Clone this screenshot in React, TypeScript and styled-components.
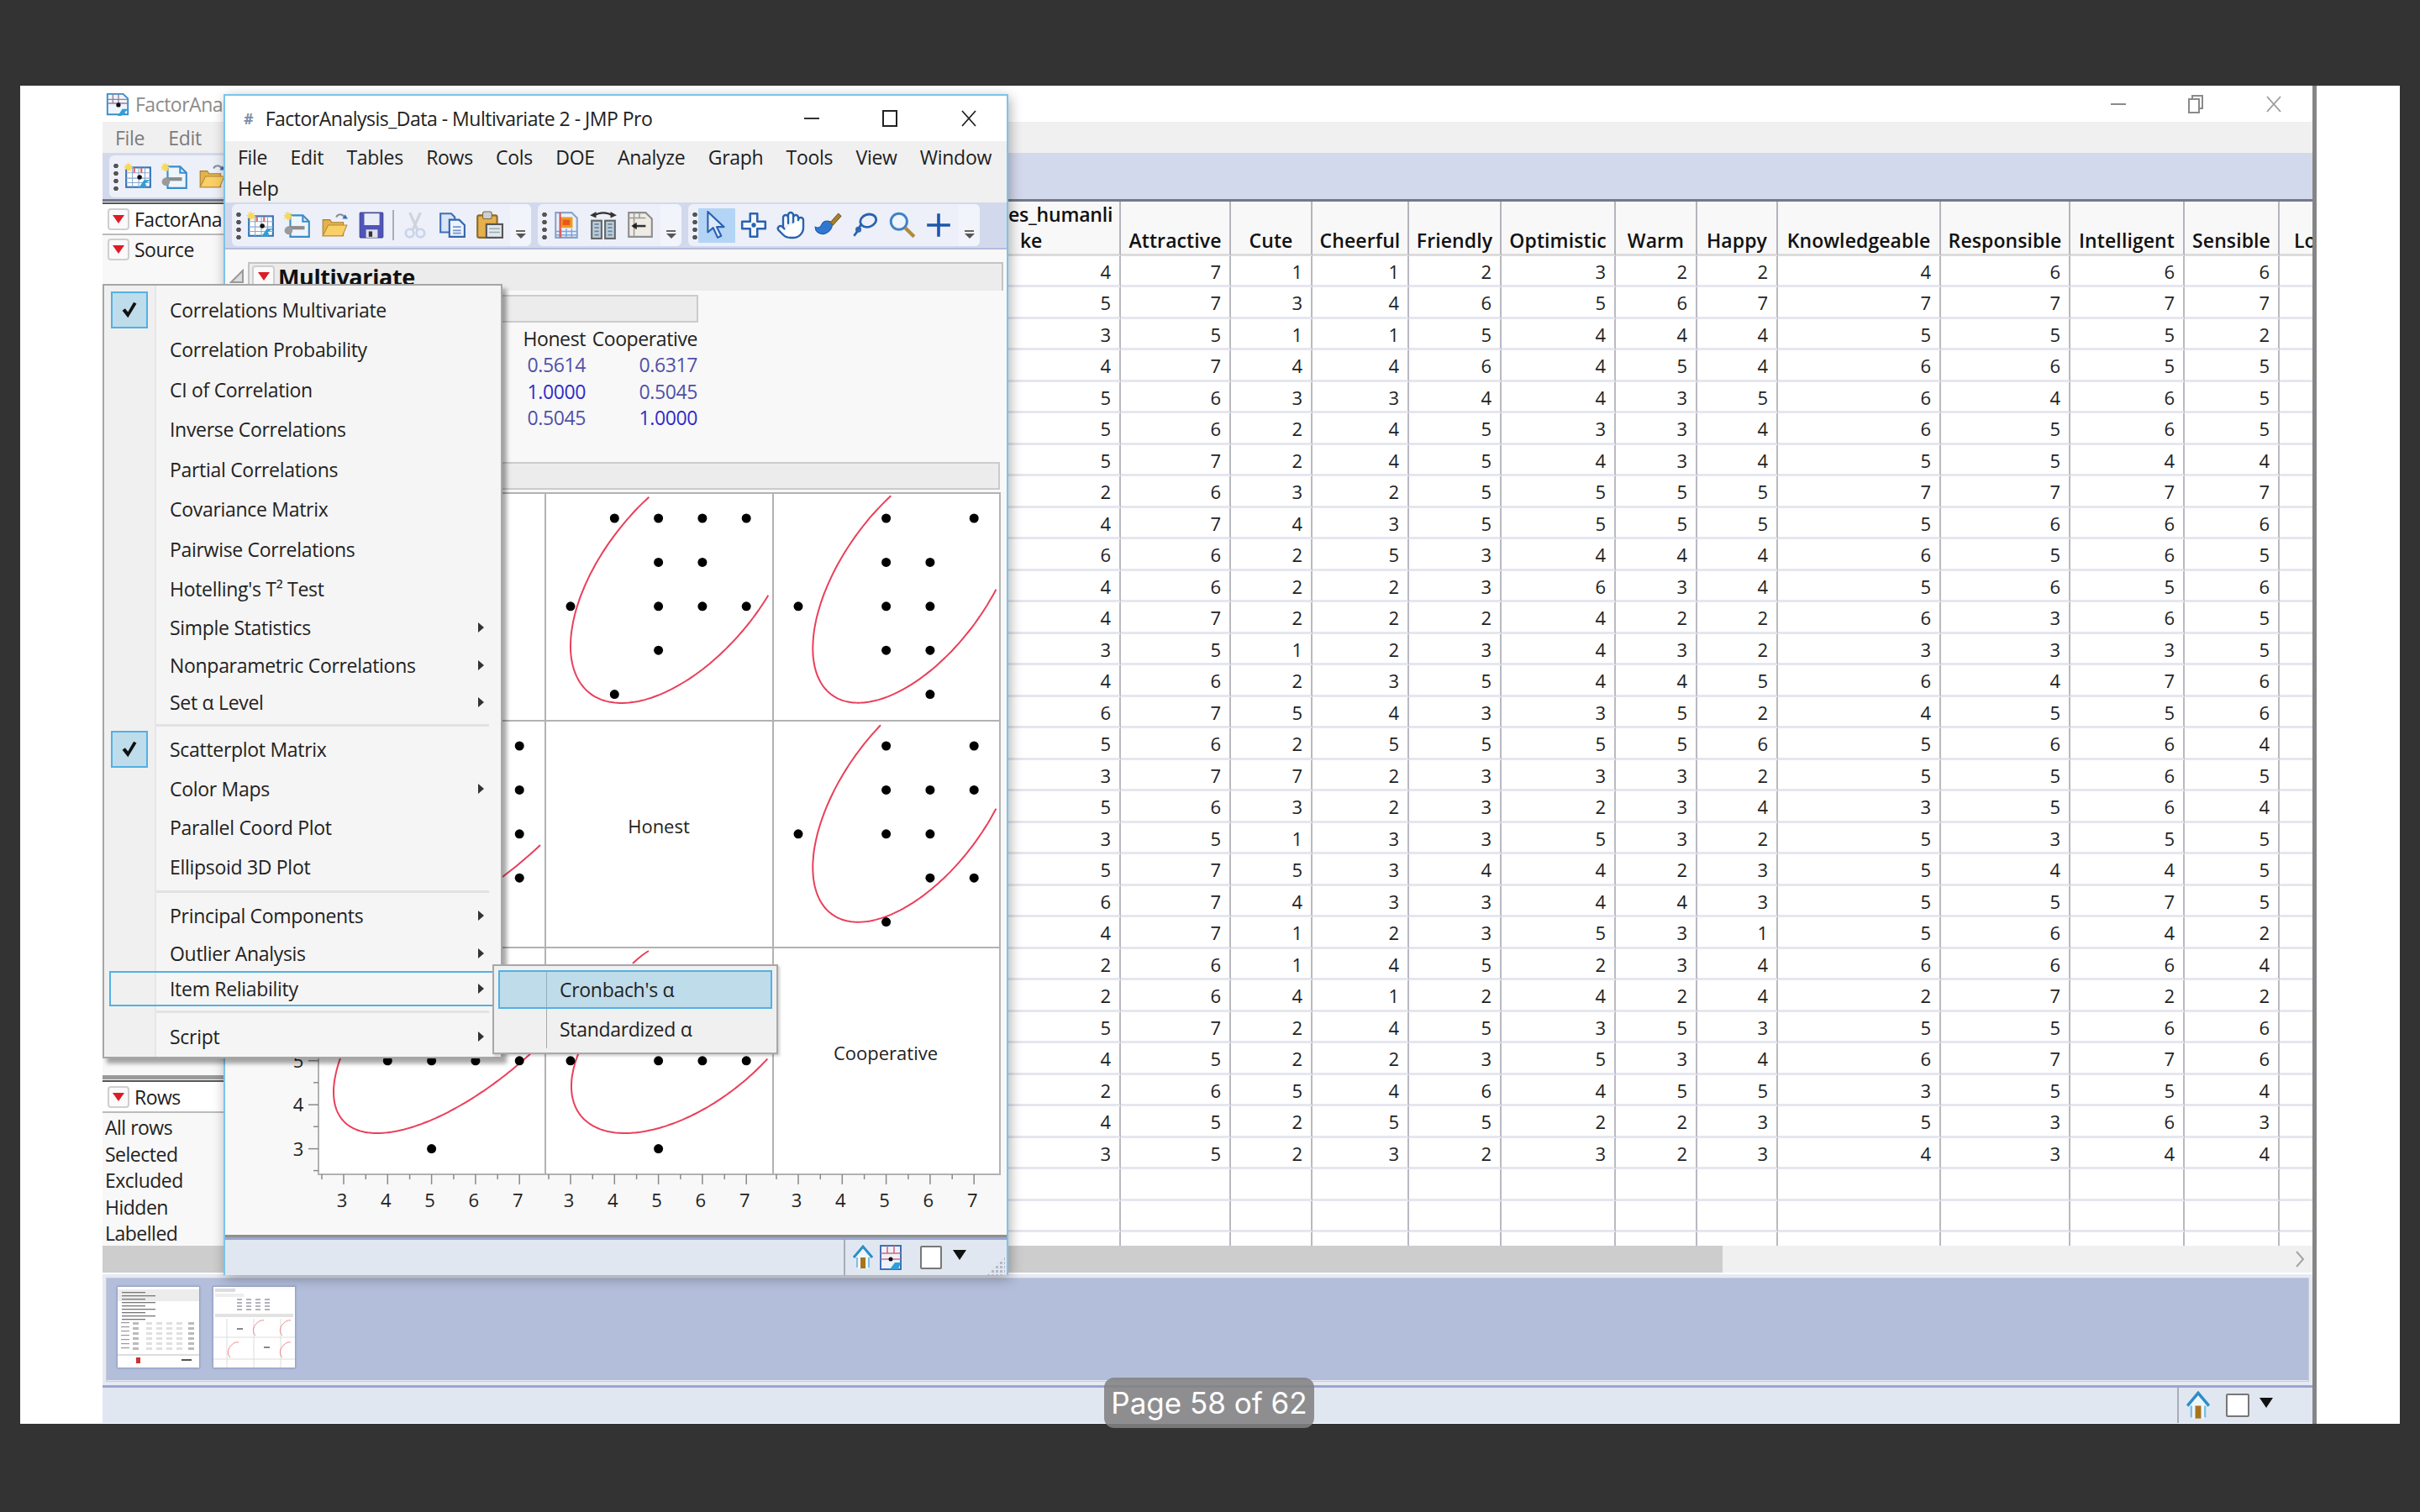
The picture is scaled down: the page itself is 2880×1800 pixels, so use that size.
import React from "react";
import styled, { createGlobalStyle } from "styled-components";
import { Hand } from "lucide-react";

const UI = `"Open Sans", "Noto Sans", "Liberation Sans", sans-serif`;

const Global = createGlobalStyle`
  html, body { margin: 0; padding: 0; background: #333333; }
  body { width: 2880px; height: 1800px; overflow: hidden; font-family: ${UI}; }
  * { box-sizing: border-box; }
`;

const Page = styled.div`
  width: 2880px;
  height: 1800px;
  padding: 102px 0 0 24px;
  background: #333333;
`;
const Slide = styled.div`
  position: relative;
  width: 2832px;
  height: 1593px;
  padding-left: 98px;
  background: #ffffff;
`;
const MainWindow = styled.div`
  display: flex;
  flex-direction: column;
  width: 2635px;
  height: 1593px;
  border-right: 5px solid #858585;
  overflow: hidden;
`;
const TitleBar = styled.div<{ $h: number }>`
  display: flex;
  align-items: center;
  flex: none;
  height: ${(p) => p.$h}px;
  background: #ffffff;
`;
const MainTitle = styled.span`
  margin-left: 6px;
  font-size: 23px;
  letter-spacing: -0.5px;
  color: #8c8c8c;
`;
const WinControls = styled.div<{ $gap: number; $right: number }>`
  display: flex;
  align-items: center;
  gap: ${(p) => p.$gap}px;
  margin-left: auto;
  margin-right: ${(p) => p.$right}px;
`;
const MenuBar = styled.div<{ $dim?: boolean; $h: number; $pad: number; $gap: number }>`
  display: flex;
  flex-wrap: wrap;
  align-content: flex-start;
  column-gap: ${(p) => p.$gap}px;
  flex: none;
  height: ${(p) => p.$h}px;
  padding: 1px 0 0 ${(p) => p.$pad}px;
  background: #f0f0f0;
  color: ${(p) => (p.$dim ? "#7b7b7b" : "#1d1d1d")};
  font-size: 23px;
  letter-spacing: -0.3px;
`;
const MenuLabel = styled.span`
  height: 37px;
  line-height: 37px;
`;
const ToolBar = styled.div<{ $h: number; $edge: string; $edgeW: number }>`
  display: flex;
  align-items: center;
  gap: 8px;
  flex: none;
  height: ${(p) => p.$h}px;
  padding-left: 8px;
  background: #d3d9ec;
  border-bottom: ${(p) => p.$edgeW}px solid ${(p) => p.$edge};
  overflow: hidden;
`;
const ToolGroup = styled.div<{ $w: number }>`
  display: flex;
  align-items: center;
  flex: none;
  width: ${(p) => p.$w}px;
  height: 50px;
  padding-left: 4px;
  background: #edf0f8;
  border-radius: 6px;
`;
const Grip = styled.div`
  flex: none;
  width: 8px;
  height: 34px;
  background: radial-gradient(circle, #555 0 2.5px, transparent 3px) 0 0 / 8px 9px repeat-y;
`;
const ToolSlot = styled.div<{ $on?: boolean }>`
  display: flex;
  align-items: center;
  justify-content: center;
  flex: none;
  width: 44px;
  height: 41px;
  background: ${(p) => (p.$on ? "#b4d4f6" : "transparent")};
`;
const ToolSep = styled.div`
  flex: none;
  width: 2px;
  height: 36px;
  margin: 0 3px;
  background: #a9adb8;
`;
const Overflow = styled.div`
  display: flex;
  flex-direction: column;
  align-items: center;
  justify-content: flex-end;
  align-self: stretch;
  flex: none;
  width: 25px;
  margin-left: auto;
  padding-bottom: 9px;
  background: #f1f4fb;
  border-radius: 0 6px 6px 0;
  &::before { content: ""; width: 11px; height: 2px; margin-bottom: 2px; background: #666; }
  &::after { content: ""; border-left: 6px solid transparent; border-right: 6px solid transparent; border-top: 6px solid #555; }
`;
const Body = styled.div`
  display: flex;
  flex: none;
  height: 1243px;
`;
const LeftPanel = styled.div`
  display: flex;
  flex-direction: column;
  flex: none;
  width: 146px;
  background: #f8f8f8;
`;
const PanelHead = styled.div<{ $boxed?: boolean }>`
  display: flex;
  align-items: center;
  flex: none;
  height: ${(p) => (p.$boxed ? 39 : 34)}px;
  margin-top: ${(p) => (p.$boxed ? 1 : 0)}px;
  padding-left: 6px;
  gap: 6px;
  font-size: 23px;
  letter-spacing: -0.5px;
  color: #1d1d1d;
  white-space: nowrap;
  overflow: hidden;
  background: ${(p) => (p.$boxed ? "#ffffff" : "transparent")};
  border-top: ${(p) => (p.$boxed ? "2px solid #555" : "0")};
  border-bottom: ${(p) => (p.$boxed ? "2px solid #bbb" : "0")};
`;
const PanelGap = styled.div`
  flex: none;
  height: 971px;
  border-bottom: 5px solid #9a9a9a;
`;
const RowsList = styled.div`
  display: flex;
  flex-direction: column;
  padding: 2px 0 0 3px;
  font-size: 23px;
  letter-spacing: -0.5px;
  color: #222;
`;
const RowsLabel = styled.div`
  height: 31.5px;
  line-height: 31.5px;
`;
const TableArea = styled.div`
  display: flex;
  flex-direction: column;
  width: 2484px;
`;
const Grid = styled.div`
  display: grid;
  grid-template-columns: 1066px 131px 97px 115px 110px 136px 97px 96px 194px 154px 136px 113px 39px;
  grid-template-rows: 64.5px;
  grid-auto-rows: 37.5px;
  flex: none;
  height: 1243px;
  overflow: hidden;
  color: #222;
  font-size: 22px;
`;
const HeadCell = styled.div`
  display: flex;
  flex-direction: column;
  align-items: center;
  justify-content: flex-end;
  padding-bottom: 0;
  background: #f8f8f8;
  border-right: 2px solid #b4b4bc;
  border-bottom: 3px solid #dcdcdc;
  font-weight: 600;
  font-size: 23px;
  letter-spacing: 0.1px;
  line-height: 31px;
  white-space: nowrap;
  color: #111;
  overflow: hidden;
`;
const FirstHead = styled(HeadCell)`
  align-items: flex-start;
  padding-left: 932px;
  letter-spacing: -0.2px;
`;
const LastHead = styled(HeadCell)`
  align-items: flex-start;
  padding-left: 17px;
  border-right: 0;
`;
const SecondLine = styled.span`
  padding-left: 14px;
`;
const Cell = styled.div`
  padding: 0 10px 0 0;
  text-align: right;
  line-height: 36px;
  border-right: 2px solid #b9b9c0;
  border-bottom: 3px solid #e6e6f0;
  &:nth-child(13n) { border-right: 0; }
`;
const ScrollBar = styled.div`
  display: flex;
  align-items: center;
  justify-content: flex-end;
  flex: none;
  height: 32px;
  padding-right: 9px;
  background: linear-gradient(#cdcdcd, #cdcdcd) 0 0 / 1928px 100% no-repeat #f0f0f0;
  color: #9a9a9a;
`;
const ThumbPanel = styled.div`
  display: flex;
  flex: none;
  gap: 17px;
  height: 132px;
  margin-top: 2px;
  padding: 10px 0 0 13px;
  border: 5px solid #e7eaf3;
  border-bottom-width: 6px;
  outline: 1px solid #c6cbdc;
  outline-offset: -5px;
  background: #b3bedb;
`;
const Thumb = styled.div`
  flex: none;
  width: 97px;
  height: 96px;
  background: #ffffff;
  box-shadow: 0 0 2px 1px #8d99bd;
`;
const StatusBar = styled.div<{ $h: number; $sep: number }>`
  display: flex;
  align-items: center;
  flex: none;
  height: ${(p) => p.$h}px;
  padding-left: ${(p) => p.$sep}px;
  background: #e1e7f1;
  border-top: 3px solid #9aa6d0;
`;
const StatusTools = styled.div<{ $gap: number }>`
  display: flex;
  align-items: center;
  align-self: stretch;
  flex: 1;
  gap: ${(p) => p.$gap}px;
  padding-left: 9px;
  border-left: 2px solid #a8acb8;
`;
const PageBox = styled.div<{ $ml: number; $w: number }>`
  flex: none;
  width: ${(p) => p.$w}px;
  height: 28px;
  margin-left: ${(p) => p.$ml}px;
  background: #ffffff;
  border: 2px solid #777;
  border-radius: 2px;
`;
const BlackTri = styled.div<{ $ml: number }>`
  flex: none;
  margin: -6px 0 0 ${(p) => p.$ml}px;
  border-left: 8px solid transparent;
  border-right: 8px solid transparent;
  border-top: 12px solid #111;
`;

const ChildWindow = styled.div`
  position: absolute;
  left: 242px;
  top: 10px;
  display: flex;
  flex-direction: column;
  width: 934px;
  height: 1406px;
  border: 2px solid #7cc3ea;
  background: #f8f8f8;
  box-shadow: 2px 4px 14px rgba(0, 0, 0, 0.32);
`;
const ChildTitle = styled.span`
  margin-left: 14px;
  font-size: 23px;
  letter-spacing: -0.5px;
  color: #222;
`;
const HashMark = styled.span`
  margin-left: 22px;
  font-size: 18px;
  font-weight: 700;
  color: #7d8fa8;
`;
const ChildBody = styled.div`
  display: flex;
  flex-direction: column;
  flex: none;
  height: 1176px;
  background: #f8f8f8;
  border-bottom: 3px solid #8f8f8f;
`;
const ReportRow = styled.div`
  display: flex;
  align-items: center;
  flex: none;
  height: 34px;
  margin-top: 15px;
  padding-left: 5px;
`;
const ReportBar = styled.div`
  display: flex;
  align-items: center;
  gap: 4px;
  width: 899px;
  height: 34px;
  margin-left: 4px;
  padding: 0 0 2px 3px;
  background: #ececec;
  border: 2px solid #c4c4c4;
  border-bottom: 0;
  font-size: 27px;
  font-weight: 700;
  letter-spacing: -0.4px;
  color: #111;
`;
const SubHead = styled.div<{ $w: number; $top: number }>`
  flex: none;
  width: ${(p) => p.$w}px;
  height: 33px;
  margin: ${(p) => p.$top}px 0 0 26px;
  background: #ececec;
  border: 2px solid #cbcbcb;
`;
const CorrTable = styled.div`
  display: grid;
  grid-template-columns: 80px 133px;
  grid-auto-rows: 31.5px;
  justify-items: end;
  align-items: center;
  flex: none;
  height: 166px;
  margin-left: 349px;
  padding-top: 3px;
  font-size: 23px;
  letter-spacing: -0.4px;
`;
const CorrHead = styled.span`
  color: #222;
`;
const CorrValue = styled.span<{ $one?: boolean }>`
  color: ${(p) => (p.$one ? "#2c2cc8" : "#5050a8")};
`;
const PlotFrame = styled.svg`
  display: block;
  flex: none;
  margin-top: 2px;
`;
const ResizeDots = styled.div`
  width: 22px;
  height: 22px;
  margin: auto 2px 0 auto;
  background: radial-gradient(circle, #b4b8c4 0 1.5px, transparent 2px) 0 0 / 5px 5px;
  clip-path: polygon(100% 0, 100% 100%, 0 100%);
`;

const RedButton = styled.span<{ $size?: number }>`
  display: inline-flex;
  align-items: center;
  justify-content: center;
  flex: none;
  width: ${(p) => p.$size ?? 26}px;
  height: ${(p) => p.$size ?? 26}px;
  background: #fafafa;
  border: 2px solid #cfcfcf;
  border-radius: 4px;
  &::after {
    content: "";
    border-left: 7px solid transparent;
    border-right: 7px solid transparent;
    border-top: 10px solid #dd1c28;
  }
`;

const Menu = styled.div`
  position: absolute;
  z-index: 2;
  left: 98px;
  top: 236px;
  width: 476px;
  height: 922px;
  padding: 5px 0 0 6px;
  border: 2px solid #a6a6a6;
  background: linear-gradient(#f0f0f0, #f0f0f0) 0 0 / 60px 100% no-repeat #f5f5f5;
  box-shadow: 5px 6px 5px rgba(0, 0, 0, 0.35);
  font-size: 23px;
  letter-spacing: -0.3px;
  color: #222;
  &::before {
    content: "";
    position: absolute;
    left: 60px;
    top: 0;
    bottom: 0;
    width: 2px;
    background: #e6e6e6;
  }
`;
const MenuItem = styled.div<{ $h: number; $active?: boolean }>`
  position: relative;
  display: flex;
  align-items: center;
  height: ${(p) => p.$h}px;
  padding-right: 18px;
  border: 2px solid ${(p) => (p.$active ? "#52b1e2" : "transparent")};
`;
const CheckSlot = styled.div`
  display: flex;
  align-items: center;
  flex: none;
  width: 70px;
`;
const CheckBox = styled.div`
  display: flex;
  align-items: center;
  justify-content: center;
  flex: none;
  width: 44px;
  height: 44px;
  background: #bfdcea;
  border: 2px solid #52b1e2;
`;
const SubArrow = styled.span`
  flex: none;
  margin-left: auto;
  border-top: 6px solid transparent;
  border-bottom: 6px solid transparent;
  border-left: 7px solid #333;
`;
const MenuSep = styled.div<{ $h: number }>`
  display: flex;
  align-items: center;
  height: ${(p) => p.$h}px;
  margin: 0 14px 0 56px;
  &::after { content: ""; flex: 1; height: 3px; background: #e2e2e2; }
`;
const SubMenu = styled.div`
  position: absolute;
  z-index: 3;
  left: 562px;
  top: 1046px;
  display: flex;
  flex-direction: column;
  width: 340px;
  height: 107px;
  padding: 5px;
  border: 2px solid #a8a8a8;
  background: #f0f0f0;
  box-shadow: 2px 2px 3px rgba(0, 0, 0, 0.2);
  font-size: 23px;
  letter-spacing: -0.3px;
  color: #222;
`;
const SubItem = styled.div<{ $active?: boolean }>`
  display: flex;
  align-items: center;
  flex: none;
  height: ${(p) => (p.$active ? 46 : 47)}px;
  padding-left: ${(p) => (p.$active ? 71 : 73)}px;
  background: ${(p) =>
    p.$active
      ? "linear-gradient(#8fb0c2, #8fb0c2) 55px 0 / 1px 100% no-repeat #bfdcea"
      : "linear-gradient(#a8a8a8, #a8a8a8) 57px 0 / 1px 100% no-repeat"};
  border: ${(p) => (p.$active ? "2px solid #52b1e2" : "0")};
`;
const Badge = styled.div`
  position: absolute;
  z-index: 4;
  left: 1290px;
  top: 1538px;
  display: flex;
  align-items: center;
  justify-content: center;
  width: 250px;
  height: 60px;
  border-radius: 12px;
  background: rgba(130, 130, 130, 0.88);
  color: #ffffff;
  font-family: Inter, "Liberation Sans", sans-serif;
  font-size: 35px;
  white-space: nowrap;
`;

/* ---------- icons ---------- */
const Svg: React.FC<{ children: React.ReactNode; s?: number; o?: number }> = ({ children, s = 34, o = 1 }) => (
  <svg width={s} height={s} viewBox="0 0 32 32" opacity={o}>
    {children}
  </svg>
);
const Star = () => <path d="M5 0l1.5 3 3-1.5L8 4.5l3 1.5-3 1.5 1.5 3-3-1.5L5 11 3.5 8l-3 1.5L2 6.5 0 5l3-.5L1.5 1.5 4 3z" fill="#f6d85c" />;
const NewTable = () => (
  <Svg>
    <rect x="3" y="6" width="27" height="22" fill="#fff" stroke="#3274b8" strokeWidth="2" />
    <path d="M3 12h27M3 18h27M3 23h27M10 6v22M17 6v22M24 6v22" stroke="#8aa8d0" strokeWidth="1" />
    <path d="M12 6v6M20 6v6" stroke="#d66" strokeWidth="2" />
    <circle cx="18" cy="17" r="2.6" fill="#111" />
    <path d="M17 29l6-9h7l-6 4 2 2-5 3z" fill="#2f9fd8" />
    <Star />
  </Svg>
);
const NewScript = () => (
  <Svg>
    <path d="M8 5h14l7 7v17H8z" fill="#eef5fb" stroke="#3a8cc8" strokeWidth="2" />
    <path d="M22 5v7h7" fill="none" stroke="#3a8cc8" strokeWidth="2" />
    <path d="M6 17h18v4H6z" fill="#8d8d8d" />
    <circle cx="6" cy="22" r="4.5" fill="#9a9a9a" />
    <Star />
  </Svg>
);
const OpenFolder = () => (
  <Svg>
    <path d="M3 28V10h8l2 3h13v15z" fill="#e3b34b" stroke="#a67d2c" />
    <path d="M3 28l6-12h21l-5 12z" fill="#f9cf68" stroke="#b88a33" />
    <path d="M18 7c2-4 7-4 9 0" fill="none" stroke="#8a8f98" strokeWidth="2" />
    <path d="M25 9h6l-3-5z" fill="#3a6fb0" />
  </Svg>
);
const Floppy = () => (
  <Svg>
    <rect x="3" y="2" width="26" height="28" rx="1" fill="#4f55b8" stroke="#3b3f94" />
    <rect x="8" y="3" width="17" height="13" fill="#e9edf8" />
    <rect x="10" y="21" width="13" height="9" fill="#dfe2ea" />
    <rect x="13" y="23" width="4" height="6" fill="#333" />
  </Svg>
);
const Scissors = () => (
  <Svg o={0.45}>
    <path d="M10 2l9 20M22 2l-9 20" stroke="#aab0bc" strokeWidth="3" fill="none" />
    <circle cx="10" cy="25" r="4.5" fill="none" stroke="#9db4dc" strokeWidth="2.5" />
    <circle cx="22" cy="25" r="4.5" fill="none" stroke="#9db4dc" strokeWidth="2.5" />
  </Svg>
);
const Copy = () => (
  <Svg>
    <path d="M3 3h12l4 4v17H3z" fill="#d8e6f8" stroke="#3f6fb8" strokeWidth="2" />
    <path d="M13 10h11l6 6v13H13z" fill="#eef4fc" stroke="#3565ae" strokeWidth="2" />
    <path d="M17 18h9M17 22h9M17 25h9" stroke="#6f96cc" strokeWidth="1.6" />
  </Svg>
);
const Paste = () => (
  <Svg>
    <rect x="3" y="5" width="22" height="25" rx="2" fill="#e6b04c" stroke="#8b6a2c" strokeWidth="2" />
    <rect x="9" y="1" width="10" height="8" rx="2" fill="#c9d0dc" stroke="#8b6a2c" />
    <rect x="13" y="15" width="18" height="15" fill="#e2e6ee" stroke="#555" strokeWidth="2" />
    <path d="M16 20h12M16 24h12" stroke="#9aa" strokeWidth="1.6" />
  </Svg>
);
const OrangeTable = () => (
  <Svg>
    <path d="M4 2h18l6 6v22H4z" fill="#eaf1fb" stroke="#8aa4cc" strokeWidth="2" />
    <path d="M4 23h24M4 27h24M10 20v10M16 20v10M22 20v10" stroke="#7ea3d8" strokeWidth="1.4" />
    <rect x="9" y="7" width="14" height="12" fill="#ef9a1e" />
    <rect x="12" y="10" width="8" height="6" fill="#e8581e" />
    <path d="M9 2v28" stroke="#e8504a" strokeWidth="2" />
  </Svg>
);
const Columns = () => (
  <Svg>
    <path d="M5 6c6-5 16-5 22 0" fill="none" stroke="#333" strokeWidth="2" />
    <path d="M1 5l7-4v7zM31 5l-7-4v7z" fill="#333" />
    <rect x="3" y="11" width="11" height="20" fill="#b9cfe0" stroke="#666" strokeWidth="2" />
    <rect x="18" y="11" width="11" height="20" fill="#b9cfe0" stroke="#666" strokeWidth="2" />
    <path d="M6 15h5M6 19h5M6 23h5M6 27h5M21 15h5M21 19h5M21 23h5M21 27h5" stroke="#6f8494" strokeWidth="1.6" />
  </Svg>
);
const ColsPage = () => (
  <Svg>
    <path d="M3 2h19l7 7v20H3z" fill="#efece6" stroke="#8e8e8e" strokeWidth="2" />
    <path d="M9 2v27M15 2v6M3 8h19" stroke="#9a9a9a" strokeWidth="1.4" />
    <path d="M8 17h14" stroke="#333" strokeWidth="2.4" />
    <path d="M6 17l6-4v8z" fill="#222" />
  </Svg>
);
const Pointer = () => (
  <Svg>
    <path d="M6 1v23l6-5 5 11 4-2-5-10h8z" fill="#dfeaf8" stroke="#2a62b0" strokeWidth="2" strokeLinejoin="round" />
  </Svg>
);
const Cross = () => (
  <Svg>
    <path d="M12 3h8v9h9v8h-9v9h-8v-9H3v-8h9z" fill="#f4f7fc" stroke="#2a62b0" strokeWidth="2.4" strokeLinejoin="round" />
    <circle cx="16" cy="16" r="2.5" fill="#2a62b0" />
  </Svg>
);
const Brush = () => (
  <Svg>
    <path d="M2 18c4 2 6 0 8-4 3-4 9-3 11 0 1 6-5 12-11 12-5 0-8-4-8-8z" fill="#2f78d0" stroke="#1f58a8" />
    <path d="M19 13l9-10 3 3-9 10z" fill="#a8812f" stroke="#7d5e20" />
  </Svg>
);
const Lasso = () => (
  <Svg>
    <ellipse cx="20" cy="11" rx="9" ry="7" fill="none" stroke="#2a62b0" strokeWidth="2.6" transform="rotate(-18 20 11)" />
    <path d="M12 15c-2 3-3 8-8 13" fill="none" stroke="#2a62b0" strokeWidth="2.6" />
    <circle cx="9" cy="21" r="2.4" fill="none" stroke="#2a62b0" strokeWidth="1.8" />
  </Svg>
);
const Magnifier = () => (
  <Svg>
    <circle cx="13" cy="12" r="9" fill="#eef5fc" stroke="#3f82c8" strokeWidth="2.8" />
    <path d="M20 19l10 10" stroke="#b08a3c" strokeWidth="4" />
  </Svg>
);
const Plus = () => (
  <Svg>
    <path d="M16 3v26M3 16h26" stroke="#1f56a8" strokeWidth="3.4" />
  </Svg>
);
const House = ({ s = 28 }: { s?: number }) => (
  <svg width={s} height={s * 1.25} viewBox="0 0 24 30">
    <path d="M12 2L1 15h4v13h14V15h4z" fill="#eef6fc" />
    <path d="M1 15L12 2l11 13" fill="none" stroke="#2b8fc8" strokeWidth="3" />
    <path d="M5 15v12M19 15v12" stroke="#7cc0e2" strokeWidth="2" />
    <rect x="9" y="15" width="6" height="13" fill="#a8741e" />
  </svg>
);
const CalIcon = () => (
  <svg width="26" height="30" viewBox="0 0 26 30">
    <rect x="1" y="1" width="24" height="28" fill="#eef2fa" stroke="#3d70b8" strokeWidth="2" />
    <path d="M1 10h24M1 17h24M9 1v9M17 1v9" stroke="#d06a78" strokeWidth="1.6" />
    <circle cx="13" cy="17" r="2.5" fill="#111" />
    <path d="M12 29l6-8h7l-3 8z" fill="#2f9fd8" />
  </svg>
);
const Tick = () => (
  <svg width="22" height="24" viewBox="0 0 26 26">
    <path d="M3 14l4-3 4 5 8-14 4 2-12 20z" fill="#111" />
  </svg>
);
const Minimize = ({ c = "#333" }: { c?: string }) => (
  <svg width="18" height="4" viewBox="0 0 18 4"><rect width="18" height="2" y="1" fill={c} /></svg>
);
const Maximize = () => (
  <svg width="18" height="20" viewBox="0 0 18 20"><rect x="1" y="1" width="16" height="18" fill="none" stroke="#222" strokeWidth="2" /></svg>
);
const Restore = () => (
  <svg width="18" height="22" viewBox="0 0 18 22">
    <rect x="1" y="5" width="12" height="16" fill="#fff" stroke="#8a8a8a" strokeWidth="2" />
    <path d="M5 5V1h12v15h-4" fill="none" stroke="#8a8a8a" strokeWidth="2" />
  </svg>
);
const CloseX = ({ c = "#222" }: { c?: string }) => (
  <svg width="20" height="20" viewBox="0 0 20 20"><path d="M2 1l16 18M18 1L2 19" stroke={c} strokeWidth="1.8" fill="none" /></svg>
);
const Chevron = () => (
  <svg width="12" height="22" viewBox="0 0 12 22"><path d="M2 2l8 9-8 9" fill="none" stroke="#a4a4a4" strokeWidth="2" /></svg>
);
const AppIcon = () => (
  <svg width="30" height="30" viewBox="0 0 32 32" style={{ marginLeft: 3 }}>
    <path d="M3 3h20l6 6v20H3z" fill="#eef5fb" stroke="#3a8cc8" strokeWidth="2" />
    <path d="M3 10h26M3 15h26M10 3v12M17 3v12" stroke="#9a7f9a" strokeWidth="1.5" />
    <circle cx="17" cy="17" r="2.8" fill="#111" />
    <path d="M16 31l6-9h8l-5 4 1 2-6 3z" fill="#2f9fd8" />
  </svg>
);
const Disclose = () => (
  <svg width="18" height="18" viewBox="0 0 18 18">
    <path d="M16 2v14H2z" fill="#dcdcdc" stroke="#9a9a9a" strokeWidth="2" />
  </svg>
);

/* ---------- plot ---------- */
const COLS = [379, 649, 920];
const ROWS = [587, 858, 1128];
const px = (c: number, v: number) => COLS[c] + 30 + 52.3 * (v - 3);
const py = (r: number, v: number) => ROWS[r] + 30 + 52.4 * (7 - v);
type Dot = [number, number, number, number];
const dots = (c: number, r: number, pts: number[][]): Dot[] => pts.map(([x, y]) => [c, r, x, y] as Dot);
const DOTS: Dot[] = [
  ...dots(1, 0, [[4, 7], [5, 7], [6, 7], [7, 7], [5, 6], [6, 6], [3, 5], [5, 5], [6, 5], [7, 5], [5, 4], [4, 3]]),
  ...dots(2, 0, [[5, 7], [7, 7], [5, 6], [6, 6], [3, 5], [5, 5], [6, 5], [5, 4], [6, 4], [6, 3]]),
  ...dots(2, 1, [[5, 7], [7, 7], [5, 6], [6, 6], [7, 6], [3, 5], [5, 5], [6, 5], [6, 4], [7, 4], [5, 3]]),
  ...dots(0, 1, [[7, 7], [7, 6], [7, 5], [7, 4]]),
  ...dots(0, 2, [[4, 5], [5, 5], [6, 5], [7, 5], [5, 3]]),
  ...dots(1, 2, [[3, 5], [5, 5], [6, 5], [7, 5], [5, 3]]),
];
/* density ellipse: x = cx + sx cos t, y = cy - sy cos(t - acos(rho)), offset to the cell origin */
const ellipse = (ox: number, oy: number, cx: number, sx: number, cy: number, sy: number, rho: number, t0: number, t1: number) => {
  const th = Math.acos(rho);
  const pts: string[] = [];
  for (let i = 0; i <= 120; i++) {
    const t = ((t0 + ((t1 - t0) * i) / 120) * Math.PI) / 180;
    pts.push(`${(ox + cx + sx * Math.cos(t)).toFixed(1)} ${(oy + cy - sy * Math.cos(t - th)).toFixed(1)}`);
  }
  return `M${pts.join("L")}`;
};
const CURVES = [
  ellipse(649, 587, 165, 135, 99, 151, 0.55, 108, 318),
  ellipse(920, 587, 170, 122.7, 102, 147.7, 0.56, 104, 321),
  ellipse(920, 858, 170, 122.7, 92, 147.7, 0.56, 110, 321),
  "M598 1044Q622 1026 643 1006",
  ellipse(379, 1128, 191, 173, 58, 163, 0.7, 150, 295),
  ellipse(649, 1128, 173, 142, 97, 124, 0.55, 160, 310),
  "M753 1147Q762 1138 772 1132",
];

const Plot = () => (
  <PlotFrame width={930} height={884} viewBox="268 585 930 884">
    <rect x="379" y="587" width="811" height="811" fill="#ffffff" />
    <g stroke="#b2b2b2" strokeWidth="2" fill="none">
      <rect x="379" y="587" width="811" height="811" />
      <path d="M649 587v811M920 587v811M379 858h811M379 1128h811" />
    </g>
    {[0, 1, 2].flatMap((c) =>
      [3, 4, 5, 6, 7].map((v) => (
        <g key={`x${c}${v}`} stroke="#8a8a8a" strokeWidth="1.5">
          <path d={`M${px(c, v)} 1398v12`} />
          <path d={`M${px(c, v) - 26} 1398v6`} />
        </g>
      ))
    )}
    {[3, 4, 5].map((v) => (
      <g key={`y${v}`} stroke="#8a8a8a" strokeWidth="1.5">
        <path d={`M367 ${py(2, v)}h12`} />
        <path d={`M373 ${py(2, v) + 26}h6`} />
      </g>
    ))}
    <g fontFamily={UI} fontSize="22" fill="#222" textAnchor="middle">
      {[0, 1, 2].flatMap((c) =>
        [3, 4, 5, 6, 7].map((v) => (
          <text key={`lx${c}${v}`} x={px(c, v) - 2} y={1437}>{v}</text>
        ))
      )}
      {[3, 4, 5].map((v) => (
        <text key={`ly${v}`} x={355} y={py(2, v) + 8}>{v}</text>
      ))}
      <text x="784" y="992">Honest</text>
      <text x="1054" y="1262">Cooperative</text>
    </g>
    {CURVES.map((d, i) => (
      <path key={i} d={d} fill="none" stroke="#ea3f5a" strokeWidth="2" />
    ))}
    {DOTS.map(([c, r, x, y], i) => (
      <circle key={i} cx={px(c, x)} cy={py(r, y)} r="5.5" fill="#000" />
    ))}
  </PlotFrame>
);

const MiniA = () => (
  <svg width="97" height="96" viewBox="0 0 97 96">
    <rect x="0" y="3" width="97" height="14" fill="#ececec" />
    {[6, 10, 14, 18, 22, 26, 30, 34, 38].map((y) => (
      <rect key={y} x="5" y={y} width={y % 8 === 2 ? 40 : 28} height="1.3" fill="#777" />
    ))}
    {[18, 34, 46, 58, 70, 84].map((x) => (
      <g key={x}>
        {[42, 48, 54, 60, 66, 72].map((y) => (
          <rect key={y} x={x} y={y} width="7" height="3" fill={(x + y) % 3 === 0 ? "#bbb" : "#e0e0e0"} />
        ))}
      </g>
    ))}
    {[42, 47, 52, 57, 62, 67, 72].map((y) => (
      <rect key={y} x="4" y={y} width="10" height="1.2" fill="#999" />
    ))}
    <rect x="0" y="80" width="97" height="2" fill="#ddd" />
    <rect x="22" y="84" width="5" height="7" fill="#c33" />
    <rect x="76" y="86" width="12" height="2" fill="#555" />
  </svg>
);
const MiniB = () => (
  <svg width="97" height="96" viewBox="0 0 97 96">
    <rect x="2" y="2" width="24" height="4" fill="#ddd" />
    <rect x="2" y="8" width="34" height="4" fill="#eee" />
    <path d="M28 15h40M28 19h40M28 23h40M28 27h40" stroke="#99a" strokeWidth="1.4" strokeDasharray="6 5" />
    <rect x="2" y="32" width="93" height="4" fill="#e2e2e2" />
    <path d="M16 38v58M48 38v58M80 38v58M0 60h97M0 86h97" stroke="#ddd" />
    <path d="M50 58c-8-8 4-20 10-18M82 58c-8-8 4-20 10-18M20 84c-8-8 4-20 10-18M82 84c-8-8 4-20 10-18" fill="none" stroke="#e88" />
    <rect x="28" y="49" width="7" height="2" fill="#888" />
    <rect x="60" y="71" width="7" height="2" fill="#888" />
  </svg>
);

/* ---------- data ---------- */
const HEADERS = ["Attractive", "Cute", "Cheerful", "Friendly", "Optimistic", "Warm", "Happy", "Knowledgeable", "Responsible", "Intelligent", "Sensible"];
const DATA = `4 7 1 1 2 3 2 2 4 6 6 6
5 7 3 4 6 5 6 7 7 7 7 7
3 5 1 1 5 4 4 4 5 5 5 2
4 7 4 4 6 4 5 4 6 6 5 5
5 6 3 3 4 4 3 5 6 4 6 5
5 6 2 4 5 3 3 4 6 5 6 5
5 7 2 4 5 4 3 4 5 5 4 4
2 6 3 2 5 5 5 5 7 7 7 7
4 7 4 3 5 5 5 5 5 6 6 6
6 6 2 5 3 4 4 4 6 5 6 5
4 6 2 2 3 6 3 4 5 6 5 6
4 7 2 2 2 4 2 2 6 3 6 5
3 5 1 2 3 4 3 2 3 3 3 5
4 6 2 3 5 4 4 5 6 4 7 6
6 7 5 4 3 3 5 2 4 5 5 6
5 6 2 5 5 5 5 6 5 6 6 4
3 7 7 2 3 3 3 2 5 5 6 5
5 6 3 2 3 2 3 4 3 5 6 4
3 5 1 3 3 5 3 2 5 3 5 5
5 7 5 3 4 4 2 3 5 4 4 5
6 7 4 3 3 4 4 3 5 5 7 5
4 7 1 2 3 5 3 1 5 6 4 2
2 6 1 4 5 2 3 4 6 6 6 4
2 6 4 1 2 4 2 4 2 7 2 2
5 7 2 4 5 3 5 3 5 5 6 6
4 5 2 2 3 5 3 4 6 7 7 6
2 6 5 4 6 4 5 5 3 5 5 4
4 5 2 5 5 2 2 3 5 3 6 3
3 5 2 3 2 3 2 3 4 3 4 4`
  .split("\n")
  .map((l) => [...l.split(" "), ""]);
const ROWS_DATA = [...DATA, ...Array.from({ length: 3 }, () => Array(13).fill(""))];

const CHILD_MENU = ["File", "Edit", "Tables", "Rows", "Cols", "DOE", "Analyze", "Graph", "Tools", "View", "Window", "Help"];
type Item = { t: string; h: number; check?: boolean; sub?: boolean; active?: boolean } | { sep: number };
const MENU: Item[] = [
  { t: "Correlations Multivariate", h: 47.5, check: true },
  { t: "Correlation Probability", h: 47.5 },
  { t: "CI of Correlation", h: 47.5 },
  { t: "Inverse Correlations", h: 47.5 },
  { t: "Partial Correlations", h: 47.5 },
  { t: "Covariance Matrix", h: 47.5 },
  { t: "Pairwise Correlations", h: 47.5 },
  { t: "Hotelling's T² Test", h: 47.5 },
  { t: "Simple Statistics", h: 44.5, sub: true },
  { t: "Nonparametric Correlations", h: 44.5, sub: true },
  { t: "Set α Level", h: 44.5, sub: true },
  { sep: 10 },
  { t: "Scatterplot Matrix", h: 47.5, check: true },
  { t: "Color Maps", h: 46, sub: true },
  { t: "Parallel Coord Plot", h: 46 },
  { t: "Ellipsoid 3D Plot", h: 48 },
  { sep: 11 },
  { t: "Principal Components", h: 46, sub: true },
  { t: "Outlier Analysis", h: 43, sub: true },
  { t: "Item Reliability", h: 42, sub: true, active: true },
  { sep: 12 },
  { t: "Script", h: 48, sub: true },
];

export default function App() {
  return (
    <Page>
      <Global />
      <Slide>
        <MainWindow>
          <TitleBar $h={43}>
            <AppIcon />
            <MainTitle>FactorAna</MainTitle>
            <WinControls $gap={74} $right={36}>
              <Minimize c="#8a8a8a" />
              <Restore />
              <CloseX c="#9a9a9a" />
            </WinControls>
          </TitleBar>
          <MenuBar $dim $h={37} $pad={15} $gap={28}>
            <MenuLabel>File</MenuLabel>
            <MenuLabel>Edit</MenuLabel>
          </MenuBar>
          <ToolBar $h={58} $edge="#74788a" $edgeW={3}>
            <ToolGroup $w={300}>
              <Grip />
              <ToolSlot><NewTable /></ToolSlot>
              <ToolSlot><NewScript /></ToolSlot>
              <ToolSlot><OpenFolder /></ToolSlot>
            </ToolGroup>
          </ToolBar>
          <Body>
            <LeftPanel>
              <PanelHead $boxed><RedButton $size={26} />FactorAna</PanelHead>
              <PanelHead><RedButton $size={26} />Source</PanelHead>
              <PanelGap />
              <PanelHead $boxed><RedButton $size={26} />Rows</PanelHead>
              <RowsList>
                <RowsLabel>All rows</RowsLabel>
                <RowsLabel>Selected</RowsLabel>
                <RowsLabel>Excluded</RowsLabel>
                <RowsLabel>Hidden</RowsLabel>
                <RowsLabel>Labelled</RowsLabel>
              </RowsList>
            </LeftPanel>
            <TableArea>
              <Grid>
                <FirstHead>
                  <span>es_humanli</span>
                  <SecondLine>ke</SecondLine>
                </FirstHead>
                {HEADERS.map((h) => (
                  <HeadCell key={h}>{h}</HeadCell>
                ))}
                <LastHead>Lo</LastHead>
                {ROWS_DATA.flatMap((row, r) => row.map((v, c) => <Cell key={`${r}-${c}`}>{v}</Cell>))}
              </Grid>
            </TableArea>
          </Body>
          <ScrollBar><Chevron /></ScrollBar>
          <ThumbPanel>
            <Thumb><MiniA /></Thumb>
            <Thumb><MiniB /></Thumb>
          </ThumbPanel>
          <StatusBar $h={45} $sep={2469}>
            <StatusTools $gap={19}>
              <House />
              <PageBox $ml={0} $w={28} />
              <BlackTri $ml={-7} />
            </StatusTools>
          </StatusBar>
        </MainWindow>

        <ChildWindow>
          <TitleBar $h={54}>
            <HashMark>#</HashMark>
            <ChildTitle>FactorAnalysis_Data - Multivariate 2 - JMP Pro</ChildTitle>
            <WinControls $gap={75} $right={35}>
              <Minimize />
              <Maximize />
              <CloseX />
            </WinControls>
          </TitleBar>
          <MenuBar $h={73} $pad={15} $gap={27.3}>
            {CHILD_MENU.map((m) => (
              <MenuLabel key={m}>{m}</MenuLabel>
            ))}
          </MenuBar>
          <ToolBar $h={56} $edge="#b3bedb" $edgeW={2}>
            <ToolGroup $w={356}>
              <Grip />
              <ToolSlot><NewTable /></ToolSlot>
              <ToolSlot><NewScript /></ToolSlot>
              <ToolSlot><OpenFolder /></ToolSlot>
              <ToolSlot><Floppy /></ToolSlot>
              <ToolSep />
              <ToolSlot><Scissors /></ToolSlot>
              <ToolSlot><Copy /></ToolSlot>
              <ToolSlot><Paste /></ToolSlot>
              <Overflow />
            </ToolGroup>
            <ToolGroup $w={171}>
              <Grip />
              <ToolSlot><OrangeTable /></ToolSlot>
              <ToolSlot><Columns /></ToolSlot>
              <ToolSlot><ColsPage /></ToolSlot>
              <Overflow />
            </ToolGroup>
            <ToolGroup $w={347}>
              <Grip />
              <ToolSlot $on><Pointer /></ToolSlot>
              <ToolSlot><Cross /></ToolSlot>
              <ToolSlot><Hand size={36} color="#2a62b0" fill="#ffffff" strokeWidth={1.6} /></ToolSlot>
              <ToolSlot><Brush /></ToolSlot>
              <ToolSlot><Lasso /></ToolSlot>
              <ToolSlot><Magnifier /></ToolSlot>
              <ToolSlot><Plus /></ToolSlot>
              <Overflow />
            </ToolGroup>
          </ToolBar>
          <ChildBody>
            <ReportRow>
              <Disclose />
              <ReportBar><RedButton $size={27} />Multivariate</ReportBar>
            </ReportRow>
            <SubHead $w={537} $top={5} />
            <CorrTable>
              <CorrHead>Honest</CorrHead>
              <CorrHead>Cooperative</CorrHead>
              <CorrValue>0.5614</CorrValue>
              <CorrValue>0.6317</CorrValue>
              <CorrValue $one>1.0000</CorrValue>
              <CorrValue>0.5045</CorrValue>
              <CorrValue>0.5045</CorrValue>
              <CorrValue $one>1.0000</CorrValue>
            </CorrTable>
            <SubHead $w={896} $top={0} />
            <Plot />
          </ChildBody>
          <StatusBar $h={45} $sep={736}>
            <StatusTools $gap={8}>
              <House s={24} />
              <CalIcon />
              <PageBox $ml={14} $w={26} />
              <BlackTri $ml={5} />
              <ResizeDots />
            </StatusTools>
          </StatusBar>
        </ChildWindow>

        <Menu>
          {MENU.map((m, i) =>
            "sep" in m ? (
              <MenuSep key={i} $h={m.sep} />
            ) : (
              <MenuItem key={m.t} $h={m.h} $active={m.active}>
                <CheckSlot>{m.check && <CheckBox><Tick /></CheckBox>}</CheckSlot>
                {m.t}
                {m.sub && <SubArrow />}
              </MenuItem>
            )
          )}
        </Menu>
        <SubMenu>
          <SubItem $active>Cronbach's α</SubItem>
          <SubItem>Standardized α</SubItem>
        </SubMenu>
        <Badge>Page 58 of 62</Badge>
      </Slide>
    </Page>
  );
}
